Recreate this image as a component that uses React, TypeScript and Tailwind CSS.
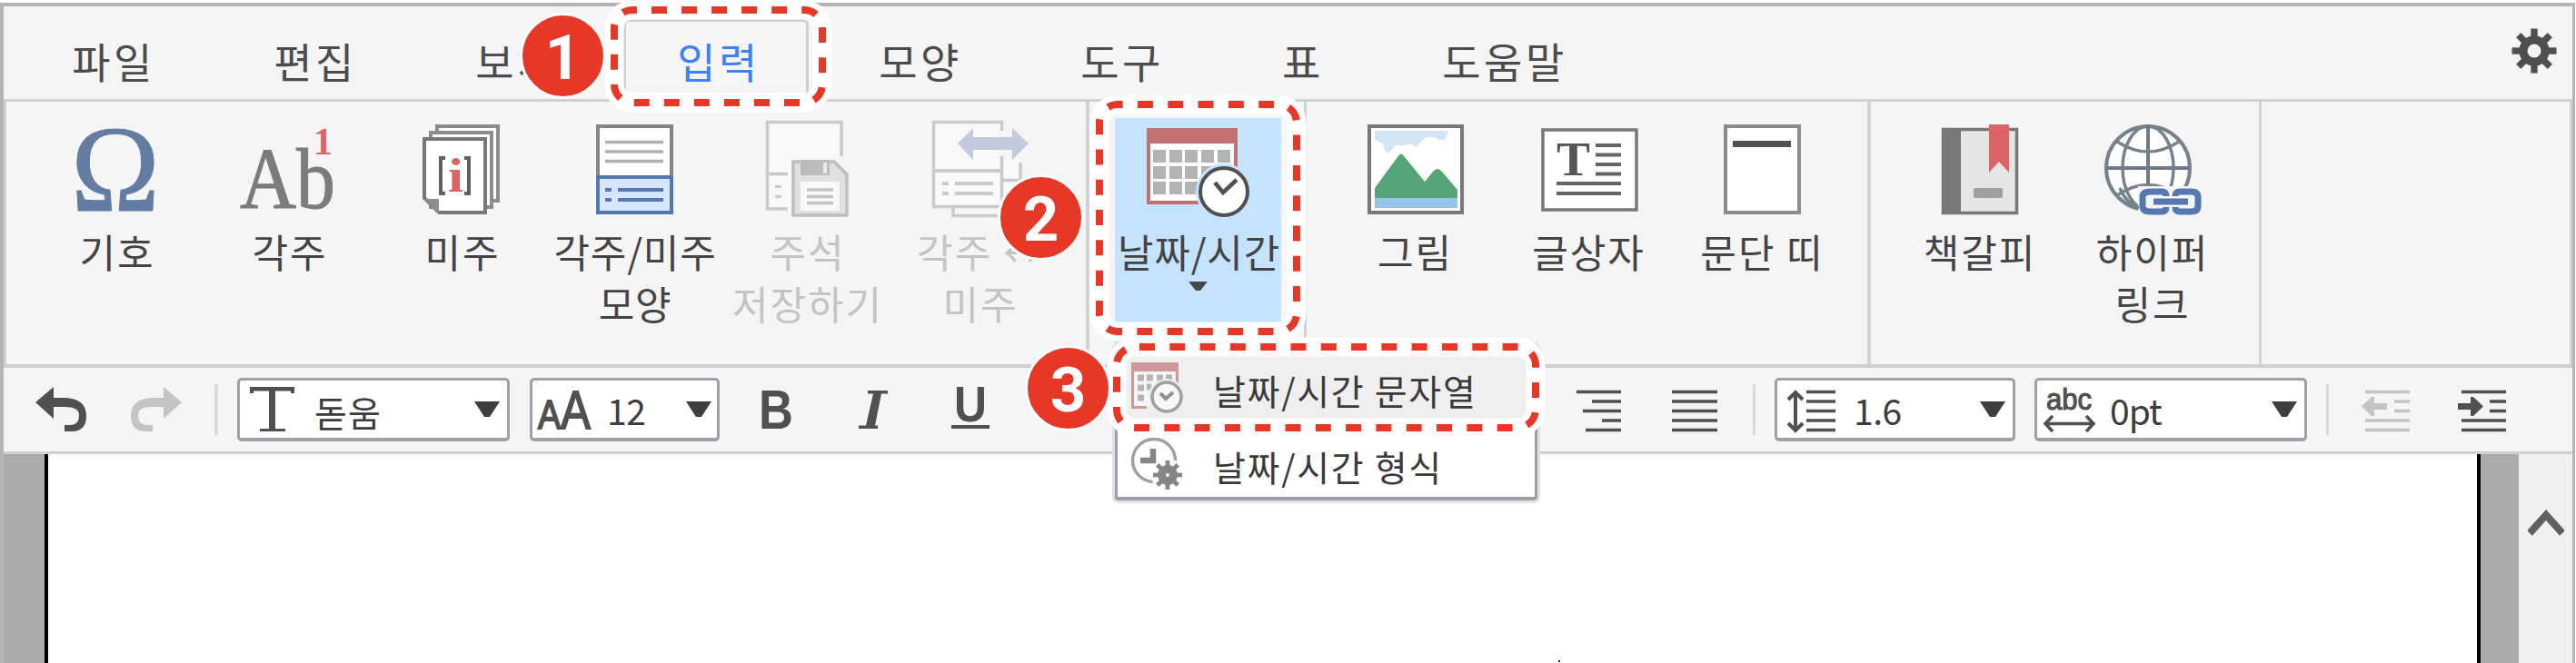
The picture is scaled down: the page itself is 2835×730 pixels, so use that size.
import type { ReactNode } from "react";

const SERIF = "Liberation Serif, serif";
const SANS = "Liberation Sans, sans-serif";

function Tab({ label, width, active }: { label: string; width: string; active?: boolean }) {
  return (
    <div
      className={`flex h-[88px] shrink-0 items-center justify-center whitespace-nowrap text-[46px] leading-[60px] tracking-[3.500px] ${width} ${
        active ? "rounded-t-md border-x-[3px] border-t-[3px] border-[#d0d0d0] text-[#4080f5]" : "text-[#4c4c4c]"
      }`}
    >
      <span className={active ? "-mt-0.5 ml-1.5" : "mt-px ml-1.5"}>{label}</span>
    </div>
  );
}

function Icon({ children }: { children: ReactNode }) {
  return (
    <svg width="110" height="110" viewBox="0 0 110 110" className="shrink-0 overflow-visible" fill="none">
      {children}
    </svg>
  );
}

function Tool({ icon, lines, width, disabled, tight }: { icon: ReactNode; lines: string[]; width: string; disabled?: boolean; tight?: boolean }) {
  return (
    <div className={`flex shrink-0 flex-col items-center pt-5 ${width} ${disabled ? "text-[#c4c4c4]" : "text-[#444444]"}`}>
      <Icon>{icon}</Icon>
      <div className="mt-1.5 ml-0.5 flex flex-col items-center">
        {lines.map((l) => (
          <span key={l} className={`whitespace-nowrap text-[43px] leading-[57px] ${tight ? "tracking-[0.800px]" : "tracking-[2px]"}`}>
            {l}
          </span>
        ))}
      </div>
    </div>
  );
}

function Combo({ icon, iconWidth, value, valueLeft, className, arrow }: { icon: ReactNode; iconWidth: number; value: string; valueLeft: string; className: string; arrow: string }) {
  return (
    <div className={`flex h-[70px] shrink-0 items-center rounded-[5px] border-[3px] border-b-4 border-[#9ea0ab] bg-white ${className}`}>
      <svg width={iconWidth} height="50" viewBox={`0 0 ${iconWidth} 50`} className="shrink-0 overflow-visible" fill="none">
        {icon}
      </svg>
      <span className={`whitespace-nowrap text-[39px] leading-[56px] text-[#3c3c3c] ${valueLeft}`}>{value}</span>
      <svg width="28" height="17" viewBox="0 0 28 17" className={`ml-auto shrink-0 ${arrow}`}>
        <path d="M0 0H28L17 17H11Z" fill="#3e3e3e" />
      </svg>
    </div>
  );
}

function BarIcon({ width, className, children }: { width: number; className: string; children: ReactNode }) {
  return (
    <svg width={width} height="50" viewBox={`0 0 ${width} 50`} className={`shrink-0 overflow-visible ${className}`} fill="none">
      {children}
    </svg>
  );
}

function Gear({ cx, cy, r, hole, color, bg }: { cx: number; cy: number; r: number; hole: number; color: string; bg: string }) {
  return (
    <g transform={`translate(${cx} ${cy})`}>
      {[0, 45, 90, 135].map((a) => (
        <rect key={a} x={-r} y={-r * 0.15} width={r * 2} height={r * 0.3} fill={color} transform={`rotate(${a})`} />
      ))}
      <circle r={r * 0.68} fill={color} />
      <circle r={hole} fill={bg} />
    </g>
  );
}

const OmegaIcon = (
  <text x="5" y="100" fontFamily={SERIF} fontSize="135" textLength="98" lengthAdjust="spacingAndGlyphs" fill="#647ca2" stroke="#647ca2" strokeWidth="1">
    Ω
  </text>
);

const FootnoteIcon = (
  <>
    <text x="1" y="97" fontFamily={SERIF} fontSize="95" textLength="105" lengthAdjust="spacingAndGlyphs" fill="#7c7c7c" stroke="#7c7c7c" strokeWidth="1">
      Ab
    </text>
    <text x="82" y="38" fontFamily={SERIF} fontSize="42" fontWeight="700" fill="#dc6467">
      1
    </text>
  </>
);

const EndnoteIcon = (
  <>
    <rect x="28" y="7" width="67" height="82" fill="#fff" stroke="#8c8c8c" strokeWidth="4" />
    <rect x="21" y="14" width="67" height="82" fill="#fff" stroke="#8c8c8c" strokeWidth="4" />
    <path d="M14 21H81V102H30L14 86Z" fill="#fff" stroke="#787878" strokeWidth="4" />
    <path d="M13 87H30V104Z" fill="#8c8c8c" />
    <path d="M37 42H32V81H37M58 42H63V81H58" stroke="#606060" strokeWidth="4" />
    <text x="40" y="79" fontFamily={SERIF} fontSize="52" fontWeight="700" textLength="17" lengthAdjust="spacingAndGlyphs" fill="#dc6467">
      i
    </text>
  </>
);

const NoteShapeIcon = (
  <>
    <rect x="15" y="7" width="81" height="95" fill="#fff" stroke="#858585" strokeWidth="4" />
    <path d="M23 24.5H87M23 35H87M23 45.5H87" stroke="#b0b0b0" strokeWidth="3.5" />
    <rect x="15" y="63" width="81" height="39" fill="#d6e6ff" stroke="#5578b0" strokeWidth="4" />
    <path d="M23 77H30M37 77H87M23 88H30M37 88H87" stroke="#5578b0" strokeWidth="4" />
  </>
);

const NoteSaveIcon = (
  <>
    <path d="M11 2H93V40H38V98H11Z" fill="#f9f9f9" />
    <path d="M93 40V2.5H11.5V98H34M11.5 59.5H34" stroke="#cacaca" strokeWidth="3.5" />
    <path d="M20 73.5H27M20 84.5H27" stroke="#cacaca" strokeWidth="3" />
    <path d="M40 46H85L99 60V105H40Z" fill="#e0e0e0" stroke="#bebebe" strokeWidth="3.5" />
    <rect x="48" y="44" width="32" height="17" fill="#bcbcbc" />
    <rect x="73" y="47" width="4" height="12" fill="#e8e8e8" />
    <rect x="48" y="68" width="43" height="32" fill="#f9f9f9" />
    <path d="M55 77H84M55 84.5H84M55 91.5H84" stroke="#c4c4c4" strokeWidth="3.5" />
  </>
);

const NoteSwapIcon = (
  <>
    <path d="M82 44H102V104H26V97" fill="#f9f9f9" />
    <path d="M100 47V105.5H26V97M80 66.5H100" stroke="#cacaca" strokeWidth="3.5" />
    <rect x="4.5" y="2.5" width="75" height="93" fill="#f9f9f9" stroke="#cacaca" strokeWidth="3.5" />
    <rect x="76" y="12" width="8" height="28" fill="#f5f5f5" />
    <path d="M4 56H79" stroke="#cacaca" strokeWidth="4" />
    <path d="M14 70H21M28 70H70M14 81H21M28 81H70" stroke="#cacaca" strokeWidth="4" />
    <path d="M31 26L48 9V19H91V9L109 26L91 44V33H48V44Z" fill="#c3cade" />
  </>
);

const DateIcon = (
  <>
    <rect x="0" y="11" width="96" height="80" fill="#fff" stroke="#c37074" strokeWidth="4" />
    <rect x="-2" y="9" width="100" height="17" fill="#c37074" />
    {[33, 51, 68].map((y) => [5, 23, 40, 58, 76].map((x) => <rect key={`${x}-${y}`} x={x} y={y} width="14" height="14" fill="#b3b3b3" />))}
    <circle cx="83" cy="79" r="31" fill="#c5e3ff" />
    <circle cx="83" cy="79" r="26" fill="#fff" stroke="#505050" strokeWidth="4" />
    <path d="M73 69L82 80L97 66" stroke="#505050" strokeWidth="4.5" />
  </>
);

const PictureIcon = (
  <>
    <rect x="5" y="7" width="102" height="95" fill="#fff" stroke="#787878" strokeWidth="4" />
    <path d="M11 12H92L88 22H82L76 19H68L62 24L56 30L50 26L44 28H34L26 37L22 34L20 26L11 22Z" fill="#d3e5f4" />
    <path d="M11 75L36 41Q40 34 44 41L66 68L75 57Q80 51 85 57L102 77V87H11Z" fill="#56a578" />
    <rect x="11" y="86" width="91" height="11" fill="#94c4e8" />
  </>
);

const TextBoxIcon = (
  <>
    <rect x="5" y="11" width="103" height="88" fill="#fff" stroke="#787878" strokeWidth="3.5" />
    <text x="20" y="61" fontFamily={SERIF} fontSize="53" fontWeight="700" textLength="37" lengthAdjust="spacingAndGlyphs" fill="#555">
      T
    </text>
    <path d="M63 28H91M63 38.5H91M63 49H91M63 59.5H91M20 70H91M20 81H91" stroke="#646464" strokeWidth="4" />
  </>
);

const ParagraphBandIcon = (
  <>
    <rect x="15" y="7" width="81" height="95" fill="#fff" stroke="#8c8c8c" strokeWidth="4" />
    <rect x="23" y="23" width="64" height="7" fill="#505050" />
  </>
);

const BookmarkIcon = (
  <>
    <rect x="15.5" y="10.5" width="81" height="92" fill="#e5e5e5" stroke="#787878" strokeWidth="3.5" />
    <rect x="14" y="9" width="21" height="95" fill="#787878" />
    <path d="M66 5H88V58L77 46L66 58Z" fill="#dc6467" />
    <rect x="49" y="75" width="32" height="11" rx="2" fill="#a0a0a0" />
  </>
);

const HyperlinkIcon = (
  <>
    <circle cx="51" cy="53" r="46" fill="#fff" stroke="#77828c" strokeWidth="4" />
    <ellipse cx="51" cy="53" rx="28" ry="46" stroke="#77828c" strokeWidth="3.5" />
    <path d="M51 6V100M5 53H97" stroke="#6e7a85" strokeWidth="4" />
    <path d="M17 24Q51 46 85 24M17 83Q51 60 85 83" stroke="#77828c" strokeWidth="3.5" />
    <path d="M40 73H112V108H40Z" fill="#f5f5f5" />
    <path d="M20 75Q27 92 41 97" stroke="#77828c" strokeWidth="3.5" />
    <path d="M71 84Q71 79 66 79H54Q45 79 45 85V95Q45 101 54 101H66Q71 101 71 96M81 84Q81 79 86 79H98Q106 79 106 85V95Q106 101 98 101H86Q81 101 81 96" stroke="#5578b0" strokeWidth="7" />
    <path d="M57 90H95" stroke="#5578b0" strokeWidth="7" />
  </>
);

function Ring({ x, y, w, h, offset, dash }: { x: number; y: number; w: number; h: number; offset: number; dash: string }) {
  return (
    <>
      <rect x={x} y={y} width={w} height={h} rx="20" stroke="#fff" strokeWidth="21" />
      <rect x={x} y={y} width={w} height={h} rx="20" stroke="#e73827" strokeWidth="8" strokeDasharray={dash} strokeDashoffset={offset} />
    </>
  );
}

function Badge({ n, className }: { n: number; className: string }) {
  return (
    <div className={`absolute flex size-[95px] items-center justify-center rounded-full border-[3px] border-white bg-[#e73827] font-[Roboto,sans-serif] text-[69px] leading-none font-bold text-white ${className}`}>
      <span className="mt-1">{n}</span>
    </div>
  );
}

function MenuRow({ icon, label, className }: { icon: ReactNode; label: string; className: string }) {
  return (
    <div className={`flex items-center pl-[15px] ${className}`}>
      <svg width="56" height="57" viewBox="0 0 56 57" className="shrink-0 overflow-visible" fill="none">
        {icon}
      </svg>
      <span className="mt-[5px] ml-[34px] whitespace-nowrap text-[39px] leading-[56px] tracking-[1.700px] text-[#3a3a3a]">{label}</span>
    </div>
  );
}

export default function App() {
  return (
    <div className="relative h-[730px] w-[2835px] overflow-hidden bg-white pt-[3px] pr-px font-['Noto_Sans_CJK_KR','Noto_Sans',sans-serif]">
      <div className="flex h-[727px] flex-col border-x-[3px] border-t-4 border-l-4 border-[#b4b4b4] bg-[#f5f5f5]">
        <nav className="flex h-[102px] shrink-0 items-start pt-[14px] pl-4">
          <div className="flex gap-[18px]">
            <Tab label="파일" width="w-[204px]" />
            <Tab label="편집" width="w-[204px]" />
            <Tab label="보기" width="w-[204px]" />
            <Tab label="입력" width="w-[204px]" active />
            <Tab label="모양" width="w-[204px]" />
            <Tab label="도구" width="w-[204px]" />
            <Tab label="표" width="w-[158px]" />
            <Tab label="도움말" width="w-[250px]" />
          </div>
          <svg width="50" height="50" viewBox="0 0 50 50" className="mt-[10px] mr-[17px] ml-auto shrink-0">
            <Gear cx={25} cy={25} r={24.5} hole={7.5} color="#4f4f4f" bg="#f5f5f5" />
          </svg>
        </nav>

        <section className="flex h-[296px] shrink-0 border-x-[3px] border-t-[3px] border-b-4 border-[#d0d0d0]">
          <div className="flex w-[1192px] shrink-0 border-r-4 border-[#d3d3d3] pl-[26px]">
            <Tool icon={OmegaIcon} lines={["기호"]} width="w-[190px]" />
            <Tool icon={FootnoteIcon} lines={["각주"]} width="w-[190px]" />
            <Tool icon={EndnoteIcon} lines={["미주"]} width="w-[190px]" />
            <Tool icon={NoteShapeIcon} lines={["각주/미주", "모양"]} width="w-[190px]" tight />
            <Tool icon={NoteSaveIcon} lines={["주석", "저장하기"]} width="w-[190px]" disabled />
            <Tool icon={NoteSwapIcon} lines={["각주 ↔", "미주"]} width="w-[190px]" disabled />
          </div>
          <div className="flex w-[239px] shrink-0 border-r-[3px] border-[#d3d3d3] pl-7">
            <div className="mt-[18px] flex h-[252px] w-[183px] flex-col items-center bg-[#c5e3ff]">
              <div className="-mt-[18px] flex flex-col items-center">
                <Tool icon={DateIcon} lines={["날짜/시간"]} width="w-[183px]" tight />
                <svg width="21" height="10" viewBox="0 0 21 10" className="mt-[5px]">
                  <path d="M0 0H21L13 10H8Z" fill="#484848" />
                </svg>
              </div>
            </div>
          </div>
          <div className="flex w-[621px] shrink-0 border-r-4 border-[#d3d3d3] pl-[23px]">
            <Tool icon={PictureIcon} lines={["그림"]} width="w-[191px]" />
            <Tool icon={TextBoxIcon} lines={["글상자"]} width="w-[191px]" />
            <Tool icon={ParagraphBandIcon} lines={["문단 띠"]} width="w-[191px]" />
          </div>
          <div className="flex w-[430px] shrink-0 border-r-[3px] border-[#d3d3d3] pl-6">
            <Tool icon={BookmarkIcon} lines={["책갈피"]} width="w-[190px]" />
            <Tool icon={HyperlinkIcon} lines={["하이퍼", "링크"]} width="w-[190px]" />
          </div>
        </section>

        <section className="flex h-[95px] shrink-0 items-center border-b-[3px] border-[#d0d0d0]">
          <BarIcon width={56} className="ml-[35px]">
            <path d="M0 17L20 0V12H30Q56 12 56 32Q56 49 40 49H32V42H39Q48 42 48 31Q48 22 32 22H20V35Z" fill="#505050" />
          </BarIcon>
          <BarIcon width={56} className="ml-[49px]">
            <path d="M56 17L36 0V12H26Q0 12 0 32Q0 49 16 49H24V42H17Q8 42 8 31Q8 22 24 22H36V35Z" fill="#c4c4c4" />
          </BarIcon>
          <div className="ml-9 h-14 w-1 shrink-0 bg-[#dadada]" />
          <Combo
            className="ml-[21px] w-[300px] pl-[11px]"
            iconWidth={49}
            icon={<path d="M0 0H49V7H45V4.5H28V46H39V49H11V46H21V4.5H4V7H0Z" fill="#505050" />}
            value="돋움"
            valueLeft="ml-[22px] pt-1 tracking-[1px]"
            arrow="mr-[8px]"
          />
          <Combo
            className="ml-[22px] w-[209px] pl-1.5"
            iconWidth={57}
            icon={
              <text x="0" y="46" fontFamily={SANS} fill="#505050" stroke="#505050" strokeWidth="1.8" textLength="58" lengthAdjust="spacingAndGlyphs">
                <tspan fontSize="45">A</tspan>
                <tspan fontSize="59">A</tspan>
              </text>
            }
            value="12"
            valueLeft="ml-[19px] tracking-[-0.500px]"
            arrow="mr-[6px]"
          />
          <BarIcon width={32} className="ml-[47px]">
            <text x="-4" y="46" fontFamily={SANS} fontSize="61" fontWeight="700" textLength="38" lengthAdjust="spacingAndGlyphs" fill="#505050">B</text>
          </BarIcon>
          <BarIcon width={32} className="ml-[74px]">
            <path d="M10 4H32V7.5H25L18 42.5H21V46H0V42.5H8L16 7.5H10Z" fill="#505050" />
          </BarIcon>
          <BarIcon width={42} className="ml-[70px]">
            <text x="3" y="38" fontFamily={SANS} fontSize="55" fontWeight="700" textLength="36" lengthAdjust="spacingAndGlyphs" fill="#505050">U</text>
            <rect x="0" y="42" width="42" height="4" fill="#505050" />
          </BarIcon>
          <BarIcon width={49} className="ml-[646px]">
            <path d="M0 5.5H49M17 16H49M7 26.5H49M28 37H49M10 47.5H49" stroke="#505050" strokeWidth="3.5" />
          </BarIcon>
          <BarIcon width={50} className="ml-14">
            <path d="M0 5.5H50M0 16H50M0 26.5H50M0 37H50M0 47.5H50" stroke="#505050" strokeWidth="3.5" />
          </BarIcon>
          <div className="ml-[39px] h-14 w-[3px] shrink-0 bg-[#dadada]" />
          <Combo
            className="ml-[21px] w-[265px] pl-[11px]"
            iconWidth={53}
            icon={
              <>
                <path d="M21 5.5H53M21 16H53M21 26.5H53M21 37H53M21 47.5H53" stroke="#505050" strokeWidth="3.5" />
                <path d="M9 6V48M1 14L9 6L17 14M1 40L9 48L17 40" stroke="#505050" strokeWidth="4" />
              </>
            }
            value="1.6"
            valueLeft="ml-[20px] tracking-[-0.500px]"
            arrow="mr-[8px]"
          />
          <Combo
            className="ml-[21px] w-[300px] pl-[7px]"
            iconWidth={57}
            icon={
              <>
                <text x="3" y="25" fontFamily={SANS} fontSize="34" textLength="50" lengthAdjust="spacingAndGlyphs" fill="#505050" stroke="#505050" strokeWidth="1.2">abc</text>
                <path d="M2 40.5H55M10 32L2 40.5L10 49M47 32L55 40.5L47 49" stroke="#505050" strokeWidth="3.5" />
              </>
            }
            value="0pt"
            valueLeft="ml-[16px] tracking-[-1px]"
            arrow="mr-[8px]"
          />
          <div className="ml-[21px] h-14 w-[3px] shrink-0 bg-[#dadada]" />
          <BarIcon width={53} className="ml-9">
            <path d="M4 5.5H53M36 16H53M36 26.5H53M4 37H53M4 47.5H53" stroke="#c4c4c4" strokeWidth="3.5" />
            <path d="M0 21.5L11 11H14V18H28V25H14V32H11Z" fill="#c4c4c4" />
          </BarIcon>
          <BarIcon width={53} className="ml-[53px]">
            <path d="M4 5.5H53M35 16H53M35 26.5H53M4 37H53M4 47.5H53" stroke="#505050" strokeWidth="3.5" />
            <path d="M28 21.5L17 11H14V18H0V25H14V32H17Z" fill="#505050" />
          </BarIcon>
        </section>

        <main className="flex grow bg-[#ababab]">
          <div className="ml-[45px] w-[2681px] shrink-0 border-x-4 border-black bg-white" />
          <div className="ml-[42px] flex grow justify-center bg-[#f0f0f0] pt-[59px]">
            <svg width="40" height="34" viewBox="0 0 40 34" fill="none">
              <path d="M2 28L20 8L38 28" stroke="#606060" strokeWidth="8" />
            </svg>
          </div>
        </main>
      </div>

      <div className="absolute top-[380px] left-[1227px] flex h-[171px] w-[465px] flex-col rounded border-[3px] border-b-4 border-[#9a9fa8] bg-white shadow-[0_0_0_3px_#dfe2e5]">
        <MenuRow
          className="h-[86px] bg-[#efefef]"
          label="날짜/시간 문자열"
          icon={
            <>
              <path d="M1.5 8V50.5H17M50.5 8V24" stroke="#d09799" strokeWidth="3" />
              <path d="M3 10H49V49H3Z" fill="#f6f6f6" />
              <rect y="1" width="52" height="10" fill="#d09799" />
              <path d="M7 18H14M17 18H24M28 18H35M38 18H45M7 29H14M7 40H14M17 28H22" stroke="#b5b5b5" strokeWidth="7" />
              <circle cx="39" cy="39" r="20" fill="#efefef" />
              <circle cx="39" cy="39" r="16" fill="#f8f8f8" stroke="#a0a0a0" strokeWidth="3.5" />
              <path d="M32 35L38 41L46 34" stroke="#909090" strokeWidth="4" />
            </>
          }
        />
        <MenuRow
          className="h-[78px] pt-1"
          label="날짜/시간 형식"
          icon={
            <>
              <circle cx="25" cy="25" r="23.5" stroke="#a0a0a0" strokeWidth="3.5" />
              <path d="M24 12V25H10" stroke="#858585" strokeWidth="6.5" />
              <circle cx="40" cy="41" r="18" fill="#fff" />
              <Gear cx={40} cy={41} r={16} hole={2} color="#858585" bg="#fff" />
            </>
          }
        />
      </div>

      <svg width="2835" height="730" viewBox="0 0 2835 730" fill="none" className="pointer-events-none absolute top-0 left-0">
        <Ring x={676} y={11} w={229} h={102} offset={-21} dash="17 16.050" />
        <Ring x={1210} y={115} w={217} h={250} offset={-22} dash="17 16.300" />
        <Ring x={1229} y={382} w={461} h={89} offset={-5} dash="17 16.300" />
        <rect x="1715" y="727" width="2" height="2" fill="#333" />
      </svg>
      <Badge n={1} className="top-[14px] left-[572px]" />
      <Badge n={2} className="top-[192px] left-[1098px]" />
      <Badge n={3} className="top-[380px] left-[1128px]" />
    </div>
  );
}
